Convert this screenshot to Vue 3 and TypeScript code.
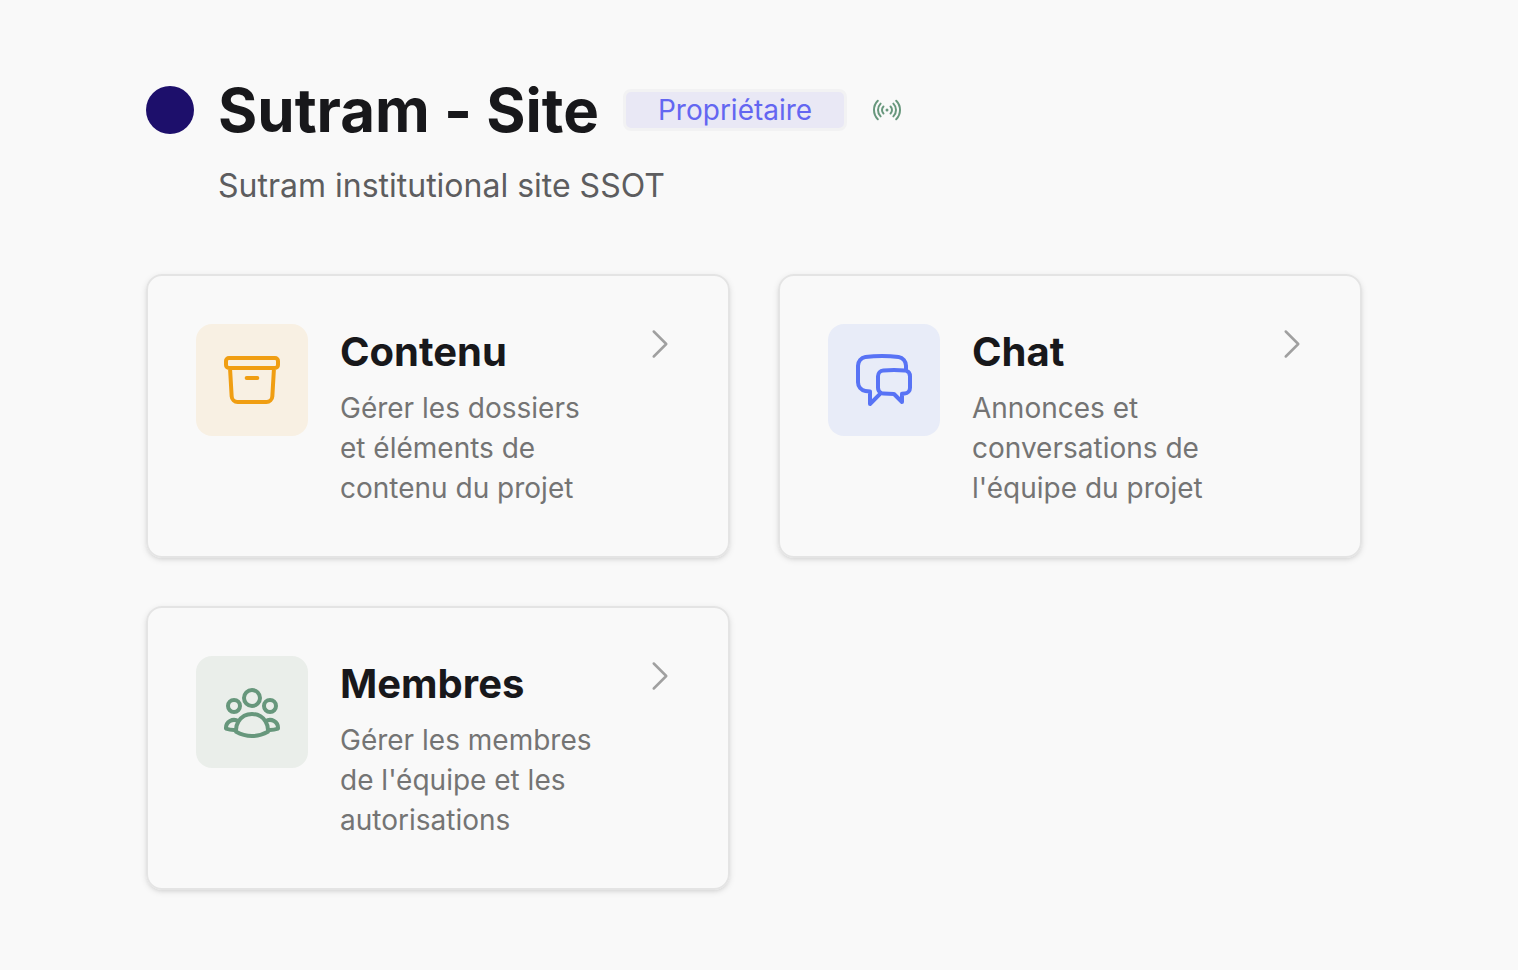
<script setup lang="ts">
interface Section {
  id: string
  title: string
  description: string
  icon: string
}

const sections: Section[] = [
  {
    id: 'contenu',
    title: 'Contenu',
    description: 'Gérer les dossiers et éléments de contenu du projet',
    icon: 'm20.25 7.5-.625 10.632a2.25 2.25 0 0 1-2.247 2.118H6.622a2.25 2.25 0 0 1-2.247-2.118L3.75 7.5M10 11.25h4M3.375 7.5h17.25c.621 0 1.125-.504 1.125-1.125v-1.5c0-.621-.504-1.125-1.125-1.125H3.375c-.621 0-1.125.504-1.125 1.125v1.5c0 .621.504 1.125 1.125 1.125Z',
  },
  {
    id: 'chat',
    title: 'Chat',
    description: "Annonces et conversations de l'équipe du projet",
    icon: 'M20.25 8.511c.884.284 1.5 1.128 1.5 2.097v4.286c0 1.136-.847 2.1-1.98 2.193-.34.027-.68.052-1.02.072v3.091l-3-3c-1.354 0-2.694-.055-4.02-.163a2.115 2.115 0 0 1-.825-.242m9.345-8.334a2.126 2.126 0 0 0-.476-.095 48.64 48.64 0 0 0-8.048 0c-1.131.094-1.976 1.057-1.976 2.192v4.286c0 .837.46 1.58 1.155 1.951m9.345-8.334V6.637c0-1.621-1.152-3.026-2.76-3.235A48.455 48.455 0 0 0 11.25 3c-2.115 0-4.198.137-6.24.402-1.608.209-2.76 1.614-2.76 3.235v6.226c0 1.621 1.152 3.026 2.76 3.235.577.075 1.157.14 1.74.194V21l4.155-4.155',
  },
  {
    id: 'membres',
    title: 'Membres',
    description: "Gérer les membres de l'équipe et les autorisations",
    icon: 'M18 18.72a9.094 9.094 0 0 0 3.741-.479 3 3 0 0 0-4.682-2.72m.94 3.198.001.031c0 .225-.012.447-.037.666A11.944 11.944 0 0 1 12 21c-2.17 0-4.207-.576-5.963-1.584A6.062 6.062 0 0 1 6 18.719m12 0a5.971 5.971 0 0 0-.941-3.197m0 0A5.995 5.995 0 0 0 12 12.75a5.995 5.995 0 0 0-5.058 2.772m0 0a3 3 0 0 0-4.681 2.72 8.986 8.986 0 0 0 3.74.477m.94-3.197a5.971 5.971 0 0 0-.94 3.197M15 6.75a3 3 0 1 1-6 0 3 3 0 0 1 6 0Zm6 3a2.25 2.25 0 1 1-4.5 0 2.25 2.25 0 0 1 4.5 0Zm-13.5 0a2.25 2.25 0 1 1-4.5 0 2.25 2.25 0 0 1 4.5 0Z',
  },
]
</script>

<template>
  <main class="page">
    <header class="header">
      <div class="heading">
        <span class="dot"></span>
        <h1 class="name">Sutram - Site</h1>
        <span class="badge">Propriétaire</span>
        <svg class="icon signal" viewBox="0 0 24 24" aria-hidden="true">
          <path d="M9.348 14.652a3.75 3.75 0 0 1 0-5.304m5.304 0a3.75 3.75 0 0 1 0 5.304m-7.425 2.121a6.75 6.75 0 0 1 0-9.546m9.546 0a6.75 6.75 0 0 1 0 9.546M5.106 18.894c-3.808-3.807-3.808-9.98 0-13.788m13.788 0c3.808 3.807 3.808 9.98 0 13.788M12 12h.008v.008H12V12Zm.375 0a.375.375 0 1 1-.75 0 .375.375 0 0 1 .75 0Z" />
        </svg>
      </div>
      <p class="subtitle">Sutram institutional site SSOT</p>
    </header>

    <nav class="grid">
      <a v-for="s in sections" :key="s.id" class="card" :href="'#' + s.id">
        <span class="tile" :class="s.id">
          <svg class="icon glyph" viewBox="0 0 24 24" aria-hidden="true"><path :d="s.icon" /></svg>
        </span>
        <div class="text">
          <h2 class="title">{{ s.title }}</h2>
          <p class="description">{{ s.description }}</p>
        </div>
        <svg class="icon chevron" viewBox="0 0 24 24" aria-hidden="true"><path d="m8.25 4.5 7.5 7.5-7.5 7.5" /></svg>
      </a>
    </nav>
  </main>
</template>

<style>
html,
body {
  background: #f9f9f9;
}
</style>

<style scoped>
.page {
  box-sizing: border-box;
  padding: 74px 156px 80px 146px;
  font-family: Inter, "Liberation Sans", sans-serif;
  font-variant-ligatures: no-contextual;
  color: #18181b;
}
.header {
  margin-bottom: 64px;
}
.heading {
  display: flex;
  align-items: center;
  gap: 24px;
}
.dot {
  flex: none;
  width: 48px;
  height: 48px;
  border-radius: 50%;
  background: #1d0f6b;
}
.name {
  margin: 0;
  font-size: 60px;
  line-height: 72px;
  font-weight: 700;
}
.badge {
  box-sizing: border-box;
  padding: 0 32px;
  border: 3px solid #f2f2f3;
  border-radius: 8px;
  background: #e9e8f5;
  color: #6366f1;
  font-size: 28px;
  line-height: 36px;
}
.icon {
  flex: none;
  fill: none;
  stroke: currentColor;
  stroke-width: 1.5;
  stroke-linecap: round;
  stroke-linejoin: round;
}
.signal {
  width: 32px;
  height: 32px;
  color: #67977c;
}
.subtitle {
  margin: 16px 0 0 72px;
  font-size: 32px;
  line-height: 48px;
  color: #5d5d5f;
}
.grid {
  display: grid;
  grid-template-columns: repeat(2, minmax(0, 1fr));
  gap: 48px;
}
.card {
  display: flex;
  align-items: flex-start;
  gap: 32px;
  padding: 48px;
  border: 2px solid #e4e4e4;
  border-radius: 16px;
  box-shadow: 0 2px 6px rgba(0, 0, 0, 0.1), 0 2px 4px -2px rgba(0, 0, 0, 0.1);
  color: inherit;
  text-decoration: none;
}
.tile {
  flex: none;
  display: flex;
  align-items: center;
  justify-content: center;
  width: 112px;
  height: 112px;
  border-radius: 16px;
}
.contenu {
  background: #f8f0e3;
  color: #f09e12;
}
.chat {
  background: #e8ecf8;
  color: #5873f5;
}
.membres {
  background: #eaeeea;
  color: #67977c;
}
.glyph {
  width: 64px;
  height: 64px;
}
.text {
  flex: 1;
  min-width: 0;
}
.title {
  margin: 0 0 8px;
  font-size: 40px;
  line-height: 56px;
  font-weight: 700;
}
.description {
  margin: 0;
  font-size: 28px;
  line-height: 40px;
  color: #747474;
}
.chevron {
  width: 40px;
  height: 40px;
  color: #a0a0a0;
}
</style>
